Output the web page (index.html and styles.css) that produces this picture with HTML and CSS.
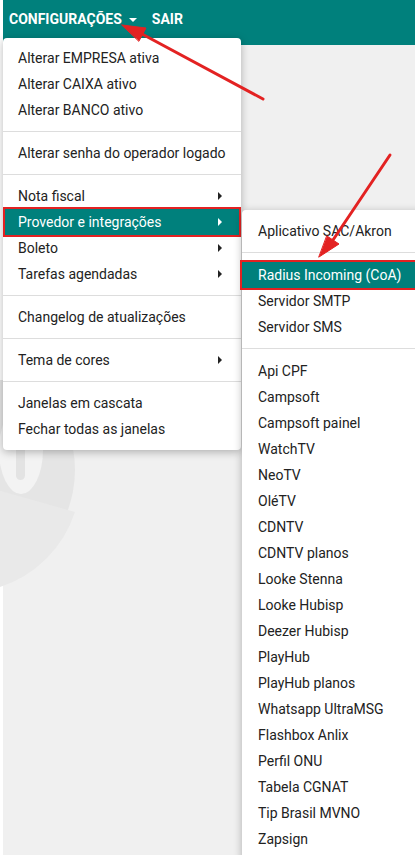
FILE: index.html
```html
<!DOCTYPE html>
<html lang="pt-BR">
<head>
    <meta charset="UTF-8">
    <meta name="viewport" content="width=device-width, initial-scale=1.0">
    <title>Configurações</title>
    <link rel="stylesheet" href="styles.css">
</head>
<body>
    <div class="page">
        <header class="topbar">
            <nav class="topnav">
                <span class="topnav-item">Configurações <span class="caret"></span></span>
                <span class="topnav-item">Sair</span>
            </nav>
        </header>

        <!-- watermark logo -->
        <svg class="watermark" width="160" height="260" viewBox="0 0 160 260">
            <circle cx="-42" cy="90" r="117" fill="#e5e5e5"/>
            <path d="M-10 108 L75 132 A117 117 0 0 1 0 207 Z" fill="#e9e9e9"/>
            <ellipse cx="21" cy="70" rx="22" ry="44" fill="#f3f3f3"/>
            <rect x="16" y="40" width="9" height="60" rx="4.5" fill="#e3e3e3"/>
        </svg>

        <div class="menu main-menu">
            <div class="menu-item">Alterar EMPRESA ativa</div>
            <div class="menu-item">Alterar CAIXA ativo</div>
            <div class="menu-item">Alterar BANCO ativo</div>
            <div class="divider"></div>
            <div class="menu-item">Alterar senha do operador logado</div>
            <div class="divider"></div>
            <div class="menu-item has-sub">Nota fiscal</div>
            <div class="menu-item has-sub active marked">Provedor e integrações</div>
            <div class="menu-item has-sub">Boleto</div>
            <div class="menu-item has-sub">Tarefas agendadas</div>
            <div class="divider"></div>
            <div class="menu-item">Changelog de atualizações</div>
            <div class="divider"></div>
            <div class="menu-item has-sub">Tema de cores</div>
            <div class="divider"></div>
            <div class="menu-item">Janelas em cascata</div>
            <div class="menu-item">Fechar todas as janelas</div>
        </div>

        <div class="menu sub-menu">
            <div class="menu-item">Aplicativo SAC/Akron</div>
            <div class="divider"></div>
            <div class="menu-item active marked">Radius Incoming (CoA)</div>
            <div class="menu-item">Servidor SMTP</div>
            <div class="menu-item">Servidor SMS</div>
            <div class="divider"></div>
            <div class="menu-item">Api CPF</div>
            <div class="menu-item">Campsoft</div>
            <div class="menu-item">Campsoft painel</div>
            <div class="menu-item">WatchTV</div>
            <div class="menu-item">NeoTV</div>
            <div class="menu-item">OléTV</div>
            <div class="menu-item">CDNTV</div>
            <div class="menu-item">CDNTV planos</div>
            <div class="menu-item">Looke Stenna</div>
            <div class="menu-item">Looke Hubisp</div>
            <div class="menu-item">Deezer Hubisp</div>
            <div class="menu-item">PlayHub</div>
            <div class="menu-item">PlayHub planos</div>
            <div class="menu-item">Whatsapp UltraMSG</div>
            <div class="menu-item">Flashbox Anlix</div>
            <div class="menu-item">Perfil ONU</div>
            <div class="menu-item">Tabela CGNAT</div>
            <div class="menu-item">Tip Brasil MVNO</div>
            <div class="menu-item">Zapsign</div>
        </div>

        <!-- annotation arrows -->
        <svg class="arrows" width="415" height="855" viewBox="0 0 415 855">
            <g stroke="#e32222" stroke-width="3" fill="#e32222" stroke-linecap="round">
                <line x1="263" y1="99" x2="142" y2="34"/>
                <polygon points="122,25 146,28 139,41" stroke-width="1"/>
                <line x1="390" y1="155" x2="333" y2="240"/>
                <polygon points="319,257 339,244 327,236" stroke-width="1"/>
            </g>
        </svg>
    </div>
</body>
</html>
```

FILE: styles.css
```css
/* Global */
html, body {
    margin: 0;
    padding: 0;
    overflow: hidden;
}

body {
    background: #fff;
    font-family: Roboto, 'Liberation Sans', sans-serif;
    color: #222;
}

.page {
    position: relative;
    margin-left: 3px;
    height: 855px;
    background: #f0f0f0;
}

/* Top bar */
.topbar {
    height: 45px;
    background: #00807c;
}

.topnav {
    display: flex;
    align-items: center;
    gap: 15px;
    height: 38px;
    padding-left: 6px;
}

.topnav-item {
    display: flex;
    align-items: center;
    gap: 7px;
    color: #fff;
    font-size: 14px;
    font-weight: bold;
    text-transform: uppercase;
}

.caret {
    width: 0;
    height: 0;
    border-left: 4px solid transparent;
    border-right: 4px solid transparent;
    border-top: 4px solid #fff;
    margin-top: 1px;
}

.watermark {
    position: absolute;
    left: -3px;
    top: 380px;
}

/* Menus */
.menu {
    position: absolute;
    background: #fff;
    border-radius: 4px;
    box-shadow: 0 2px 8px rgba(0, 0, 0, 0.28);
}

.main-menu {
    top: 38px;
    left: 0;
    width: 238px;
    padding: 7px 0 8px;
}

.sub-menu {
    top: 210px;
    left: 239px;
    width: 190px;
    padding: 8px 0;
}

.menu-item {
    position: relative;
    height: 26px;
    line-height: 26px;
    padding-left: 15px;
    font-size: 14px;
    color: #222;
    white-space: nowrap;
}

.sub-menu .menu-item {
    padding-left: 16px;
}

.menu-item.has-sub::after {
    content: '';
    position: absolute;
    right: 19px;
    top: 9px;
    border-top: 4px solid transparent;
    border-bottom: 4px solid transparent;
    border-left: 4px solid #222;
}

.menu-item.active {
    background: #00807c;
    color: #fff;
}

.menu-item.active::after {
    border-left-color: #fff;
}

.menu-item.marked {
    border: 2px solid #e32222;
    margin: -2px 0;
    padding-left: 13px;
}

.main-menu .menu-item.marked::after {
    right: 17px;
}

.sub-menu .menu-item.marked {
    margin: -2px 14px -2px -2px;
    padding-left: 16px;
}

.divider {
    height: 1px;
    margin: 8px 0;
    background: #ddd;
}

.sub-menu .divider {
    margin: 8px 0 9px;
}

.arrows {
    position: absolute;
    left: -3px;
    top: 0;
    pointer-events: none;
}
```
